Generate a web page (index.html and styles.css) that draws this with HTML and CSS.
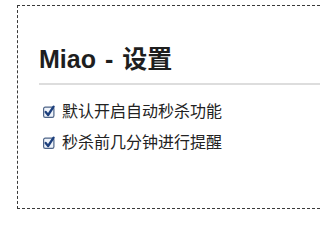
FILE: index.html
```html
<!DOCTYPE html>
<html lang="zh">
<head>
<meta charset="utf-8">
<title>Miao - 设置</title>
<link rel="stylesheet" href="styles.css">
</head>
<body>
<div class="panel">
  <h1 class="title">Miao - 设置</h1>
  <div class="options">
    <label class="option">
      <svg class="check" width="12" height="13" viewBox="0 0 12 13" aria-hidden="true">
        <rect x="0.6" y="2.1" width="10.3" height="10.3" rx="1.6" fill="#eef3fa" stroke="#4f6588" stroke-width="1.2"/>
        <path d="M2.7 7 L5.1 10 L10.6 1.6" fill="none" stroke="#1c3f7d" stroke-width="2.3" stroke-linecap="round" stroke-linejoin="round"/>
      </svg>
      <span>默认开启自动秒杀功能</span>
    </label>
    <label class="option">
      <svg class="check" width="12" height="13" viewBox="0 0 12 13" aria-hidden="true">
        <rect x="0.6" y="2.1" width="10.3" height="10.3" rx="1.6" fill="#eef3fa" stroke="#4f6588" stroke-width="1.2"/>
        <path d="M2.7 7 L5.1 10 L10.6 1.6" fill="none" stroke="#1c3f7d" stroke-width="2.3" stroke-linecap="round" stroke-linejoin="round"/>
      </svg>
      <span>秒杀前几分钟进行提醒</span>
    </label>
  </div>
</div>
</body>
</html>
```
FILE: styles.css
```css
html, body {
  margin: 0;
  padding: 0;
  background: #ffffff;
  overflow: hidden;
}
body {
  font-family: "Liberation Sans", "Noto Sans CJK SC", sans-serif;
  color: #222222;
}
.panel {
  margin: 5px 0 0 17px;
  height: 202px;
  border: 1px dashed #3a3a3a;
  border-right: none;
  padding-left: 21px;
  box-sizing: content-box;
}
.title {
  margin: 39px 0 0 0;
  font-size: 25px;
  line-height: 28px;
  font-weight: bold;
  color: #1e1e1e;
  padding-bottom: 10px;
  border-bottom: 2px solid #dddddd;
  word-spacing: 2px;
}
.options {
  display: flex;
  flex-direction: column;
  gap: 11px;
  margin-top: 17px;
}
.option {
  display: flex;
  align-items: center;
  gap: 7px;
  height: 20px;
  padding-left: 4px;
  font-size: 16px;
  line-height: 20px;
  color: #222222;
}
.check {
  flex: none;
  display: block;
  margin-top: -2px;
}
```
